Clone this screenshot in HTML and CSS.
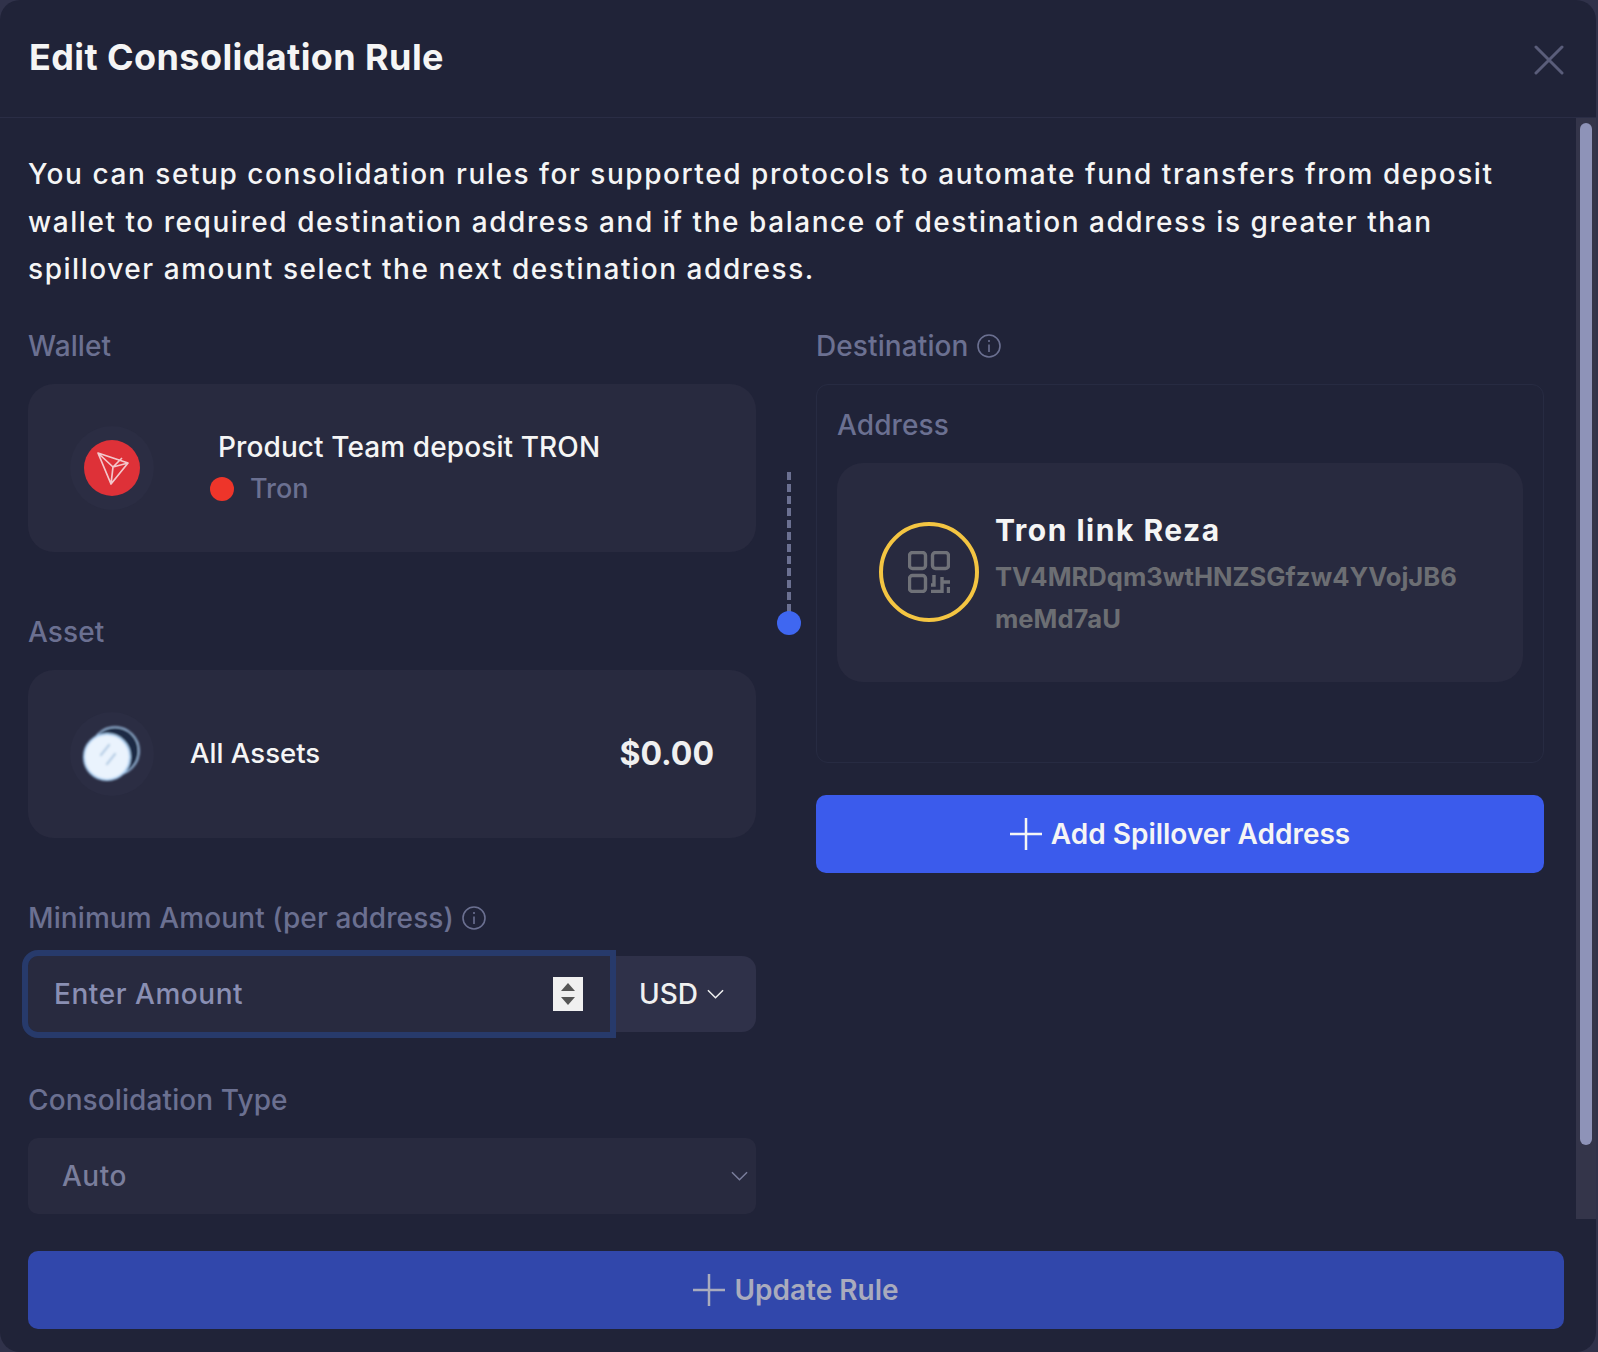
FILE: index.html
```html
<!DOCTYPE html>
<html lang="en">
<head>
  <meta charset="UTF-8" />
  <title>Edit Consolidation Rule</title>
  <link rel="stylesheet" href="styles.css">
</head>
<body>
  <div class="modal">
    <div class="modal-header">
      <h2>Edit Consolidation Rule</h2>
      <svg class="close-icon" viewBox="0 0 30 30"><path d="M2 2L28 28M28 2L2 28" /></svg>
    </div>

    <div class="modal-middle">
      <div class="modal-body">
        <p class="intro">You can setup consolidation rules for supported protocols to automate fund transfers from deposit wallet to required destination address and if the balance of destination address is greater than spillover amount select the next destination address.</p>

        <div class="columns">
          <div class="col">
            <div class="field-label">Wallet</div>
            <div class="card">
              <div class="halo">
                <svg class="coin" viewBox="0 0 56 56">
                  <circle cx="28" cy="28" r="28" fill="#de3138" />
                  <path class="tron-lines" d="M14 13L44 23L27 44ZM14 13L29 27L27 44M29 27L44 23M38 18L29 27" />
                </svg>
              </div>
              <div class="wallet-text">
                <div class="wallet-name">Product Team deposit TRON</div>
                <div class="wallet-chain"><span class="chain-dot"></span>Tron</div>
              </div>
            </div>

            <div class="field-label spaced">Asset</div>
            <div class="card">
              <div class="halo">
                <svg class="coin" viewBox="0 0 56 56">
                  <defs><filter id="soft"><feGaussianBlur stdDeviation="1" /></filter></defs>
                  <g filter="url(#soft)">
                    <circle cx="31" cy="25" r="24" fill="#1d2a44" stroke="#9fc0e4" stroke-width="1.6" />
                    <circle cx="23" cy="31" r="23" fill="#eaf3fd" stroke="#a9cdf0" stroke-width="2" />
                    <path d="M17 29L25 19M23 38L31 28" stroke="#b8cfe6" stroke-width="2.4" stroke-linecap="round" />
                  </g>
                </svg>
              </div>
              <div class="asset-name">All Assets</div>
              <div class="asset-value">$0.00</div>
            </div>

            <div class="field-label spaced">Minimum Amount (per address)
              <svg class="info-icon" viewBox="0 0 24 24"><circle cx="12" cy="12" r="11" /><path d="M12 10.5V18M12 6V8" /></svg>
            </div>
            <div class="amount-row">
              <div class="amount-input">
                <span>Enter Amount</span>
                <div class="spinner"><i class="arrow-up"></i><i class="arrow-down"></i></div>
              </div>
              <div class="currency">USD
                <svg class="chevron" viewBox="0 0 18 10"><path d="M1 1L9 9L17 1" /></svg>
              </div>
            </div>

            <div class="field-label type-label">Consolidation Type</div>
            <div class="type-select">
              <span>Auto</span>
              <svg class="chevron" viewBox="0 0 18 10"><path d="M1 1L9 9L17 1" /></svg>
            </div>
          </div>

          <div class="connector">
            <div class="connector-line"></div>
            <div class="connector-dot"></div>
          </div>

          <div class="col">
            <div class="field-label">Destination
              <svg class="info-icon" viewBox="0 0 24 24"><circle cx="12" cy="12" r="11" /><path d="M12 10.5V18M12 6V8" /></svg>
            </div>
            <div class="dest-box">
              <div class="field-label">Address</div>
              <div class="dest-card">
                <div class="qr-ring">
                  <svg class="qr-icon" viewBox="0 0 42 42">
                    <rect x="1.5" y="1.5" width="16" height="16" rx="3" />
                    <rect x="24.5" y="1.5" width="16" height="16" rx="3" />
                    <rect x="1.5" y="24.5" width="16" height="16" rx="3" />
                    <path d="M26 24V34H23M23 40.5H34V26M34 31H42M40.5 36V42" />
                  </svg>
                </div>
                <div class="dest-text">
                  <div class="dest-name">Tron link Reza</div>
                  <div class="dest-address">TV4MRDqm3wtHNZSGfzw4YVojJB6meMd7aU</div>
                </div>
              </div>
            </div>
            <button class="btn-primary">
              <svg class="plus-icon" viewBox="0 0 32 32"><path d="M16 0V32M0 16H32" /></svg>
              Add Spillover Address
            </button>
          </div>
        </div>
      </div>

      <div class="scrollbar"><div class="scrollbar-thumb"></div></div>
    </div>

    <div class="modal-footer">
      <button class="btn-primary btn-update">
        <svg class="plus-icon" viewBox="0 0 32 32"><path d="M16 0V32M0 16H32" /></svg>
        Update Rule
      </button>
    </div>
  </div>
</body>
</html>
```

FILE: styles.css
```css
* {
  box-sizing: border-box;
}

html, body {
  margin: 0;
  height: 100%;
}

body {
  font-family: Inter, 'Open Sans', sans-serif;
  background-color: #30324a;
  overflow: hidden;
}

.modal {
  width: 1596px;
  height: 1352px;
  background: #202338;
  border-radius: 20px;
  display: flex;
  flex-direction: column;
  overflow: hidden;
}

.modal-header {
  height: 118px;
  flex: none;
  border-bottom: 1px solid #2a2d45;
  padding: 0 32px 0 29px;
  display: flex;
  align-items: center;
  justify-content: space-between;
}

.modal-header h2 {
  margin: 0 0 4px;
  font-size: 36px;
  font-weight: 700;
  letter-spacing: 0.4px;
  color: #f5f5f5;
}

.close-icon {
  width: 30px;
  height: 30px;
  margin-top: 2px;
}

.close-icon path {
  stroke: #5a5d7a;
  stroke-width: 3;
  stroke-linecap: round;
  fill: none;
}

.modal-middle {
  height: 1101px;
  flex: none;
  display: flex;
  overflow: hidden;
}

.modal-body {
  width: 1576px;
  flex: none;
  padding: 33px 0 0 28px;
}

.scrollbar {
  width: 20px;
  flex: none;
  background: #34354a;
  padding: 5px 4px 0;
}

.scrollbar-thumb {
  height: 1022px;
  background: #8e93b8;
  border-radius: 6px;
}

.intro {
  max-width: 1500px;
  margin: 0 0 32px;
  font-size: 28px;
  font-weight: 500;
  letter-spacing: 1.55px;
  line-height: 47.5px;
  color: #f5f5f5;
}

.columns {
  display: grid;
  grid-template-columns: 728px 60px 728px;
}

.field-label {
  height: 40px;
  line-height: 42px;
  margin-bottom: 18px;
  font-size: 28px;
  font-weight: 500;
  letter-spacing: 0.1px;
  color: #6b7091;
  display: flex;
  align-items: center;
  gap: 8px;
}

.field-label.spaced {
  margin-top: 60px;
}

.field-label.type-label {
  margin-top: 48px;
}

.info-icon {
  width: 24px;
  height: 24px;
}

.info-icon circle,
.info-icon path {
  fill: none;
  stroke: #6b7091;
  stroke-width: 1.6;
}

.card {
  height: 168px;
  background: #282a3f;
  border-radius: 26px;
  padding: 0 42px;
  display: flex;
  align-items: center;
}

.halo {
  width: 84px;
  height: 84px;
  flex: none;
  border-radius: 50%;
  background: #2b2d43;
  display: flex;
  align-items: center;
  justify-content: center;
}

.coin {
  width: 56px;
  height: 56px;
  overflow: visible;
}

.tron-lines {
  fill: none;
  stroke: #f3c7cb;
  stroke-width: 1.7;
  stroke-linejoin: round;
}

.wallet-text {
  margin-left: 56px;
}

.wallet-name {
  margin-left: 8px;
  font-size: 28px;
  font-weight: 500;
  letter-spacing: 0.1px;
  line-height: 40px;
  color: #f5f5f5;
}

.wallet-chain {
  margin-top: 2px;
  display: flex;
  align-items: center;
  font-size: 27px;
  font-weight: 500;
  line-height: 40px;
  color: #6b7091;
}

.chain-dot {
  width: 24px;
  height: 24px;
  border-radius: 50%;
  background: #ee352a;
  margin-right: 16px;
}

.asset-name {
  margin: 0 0 2px 36px;
  font-size: 27.6px;
  font-weight: 500;
  color: #f5f5f5;
}

.asset-value {
  margin-left: auto;
  font-size: 32px;
  font-weight: 700;
  color: #f0f0f0;
}

.amount-row {
  display: flex;
  height: 76px;
}

.amount-input {
  width: 582px;
  background: #282a3f;
  border-radius: 10px 0 0 10px;
  outline: 6px solid #273a6b;
  padding: 0 27px 0 26px;
  display: flex;
  align-items: center;
  justify-content: space-between;
  font-size: 28px;
  font-weight: 500;
  letter-spacing: 0.55px;
  color: #8a8fb3;
  position: relative;
}

.spinner {
  width: 30px;
  height: 34px;
  background: #f0f0f0;
  display: flex;
  flex-direction: column;
  align-items: center;
  justify-content: center;
  gap: 6px;
}

.arrow-up,
.arrow-down {
  width: 0;
  height: 0;
  border-left: 7px solid transparent;
  border-right: 7px solid transparent;
}

.arrow-up {
  border-bottom: 8px solid #555;
}

.arrow-down {
  border-top: 8px solid #555;
}

.currency {
  flex: 1;
  background: #2f3149;
  border-radius: 0 14px 14px 0;
  padding-left: 29px;
  display: flex;
  align-items: center;
  gap: 9px;
  font-size: 28px;
  font-weight: 500;
  color: #f0f0f0;
}

.chevron {
  width: 17px;
  height: 10px;
}

.chevron path {
  fill: none;
  stroke: #f0f0f0;
  stroke-width: 1.6;
}

.type-select {
  height: 76px;
  background: #282a3f;
  border-radius: 10px;
  padding: 0 8px 0 34px;
  display: flex;
  align-items: center;
  justify-content: space-between;
  font-size: 28px;
  font-weight: 500;
  letter-spacing: 0.5px;
  color: #7a7e9c;
}

.type-select .chevron path {
  stroke: #7a7e9c;
}

.connector {
  display: flex;
  flex-direction: column;
  align-items: center;
  padding: 146px 0 0 6px;
}

.connector-line {
  width: 4px;
  height: 140px;
  background: repeating-linear-gradient(to bottom, #6b7091 0, #6b7091 8px, transparent 8px, transparent 12px);
}

.connector-dot {
  width: 24px;
  height: 24px;
  margin-top: -1px;
  border-radius: 50%;
  background: #3f67f1;
}

.dest-box {
  height: 379px;
  border: 1px solid #272b42;
  border-radius: 12px;
  padding: 20px;
}

.dest-card {
  height: 219px;
  background: #282a3f;
  border-radius: 26px;
  padding: 0 42px;
  display: flex;
  align-items: center;
  gap: 16px;
}

.qr-ring {
  width: 100px;
  height: 100px;
  flex: none;
  border: 4px solid #f4c542;
  border-radius: 50%;
  display: flex;
  align-items: center;
  justify-content: center;
}

.qr-icon {
  width: 42px;
  height: 42px;
}

.qr-icon rect,
.qr-icon path {
  fill: none;
  stroke: #6f7178;
  stroke-width: 3.4;
}

.dest-text {
  min-width: 0;
  margin-top: 4px;
}

.dest-name {
  font-size: 30px;
  font-weight: 700;
  letter-spacing: 1.5px;
  line-height: 42px;
  margin-bottom: 5px;
  color: #f5f5f5;
}

.dest-address {
  max-width: 470px;
  font-size: 25.6px;
  font-weight: 700;
  line-height: 42px;
  color: #6c6e73;
  word-break: break-all;
}

.btn-primary {
  width: 100%;
  height: 78px;
  margin-top: 32px;
  border: none;
  border-radius: 10px;
  background: #3b5bec;
  color: #f5f5f5;
  font-family: inherit;
  font-size: 28px;
  font-weight: 600;
  display: flex;
  align-items: center;
  justify-content: center;
  gap: 9px;
}

.plus-icon {
  width: 32px;
  height: 32px;
}

.plus-icon path {
  fill: none;
  stroke: currentColor;
  stroke-width: 2.5;
}

.modal-footer {
  padding: 32px 32px 0 28px;
}

.btn-update {
  margin-top: 0;
  background: #3147ab;
  color: #a9abbd;
}
```
